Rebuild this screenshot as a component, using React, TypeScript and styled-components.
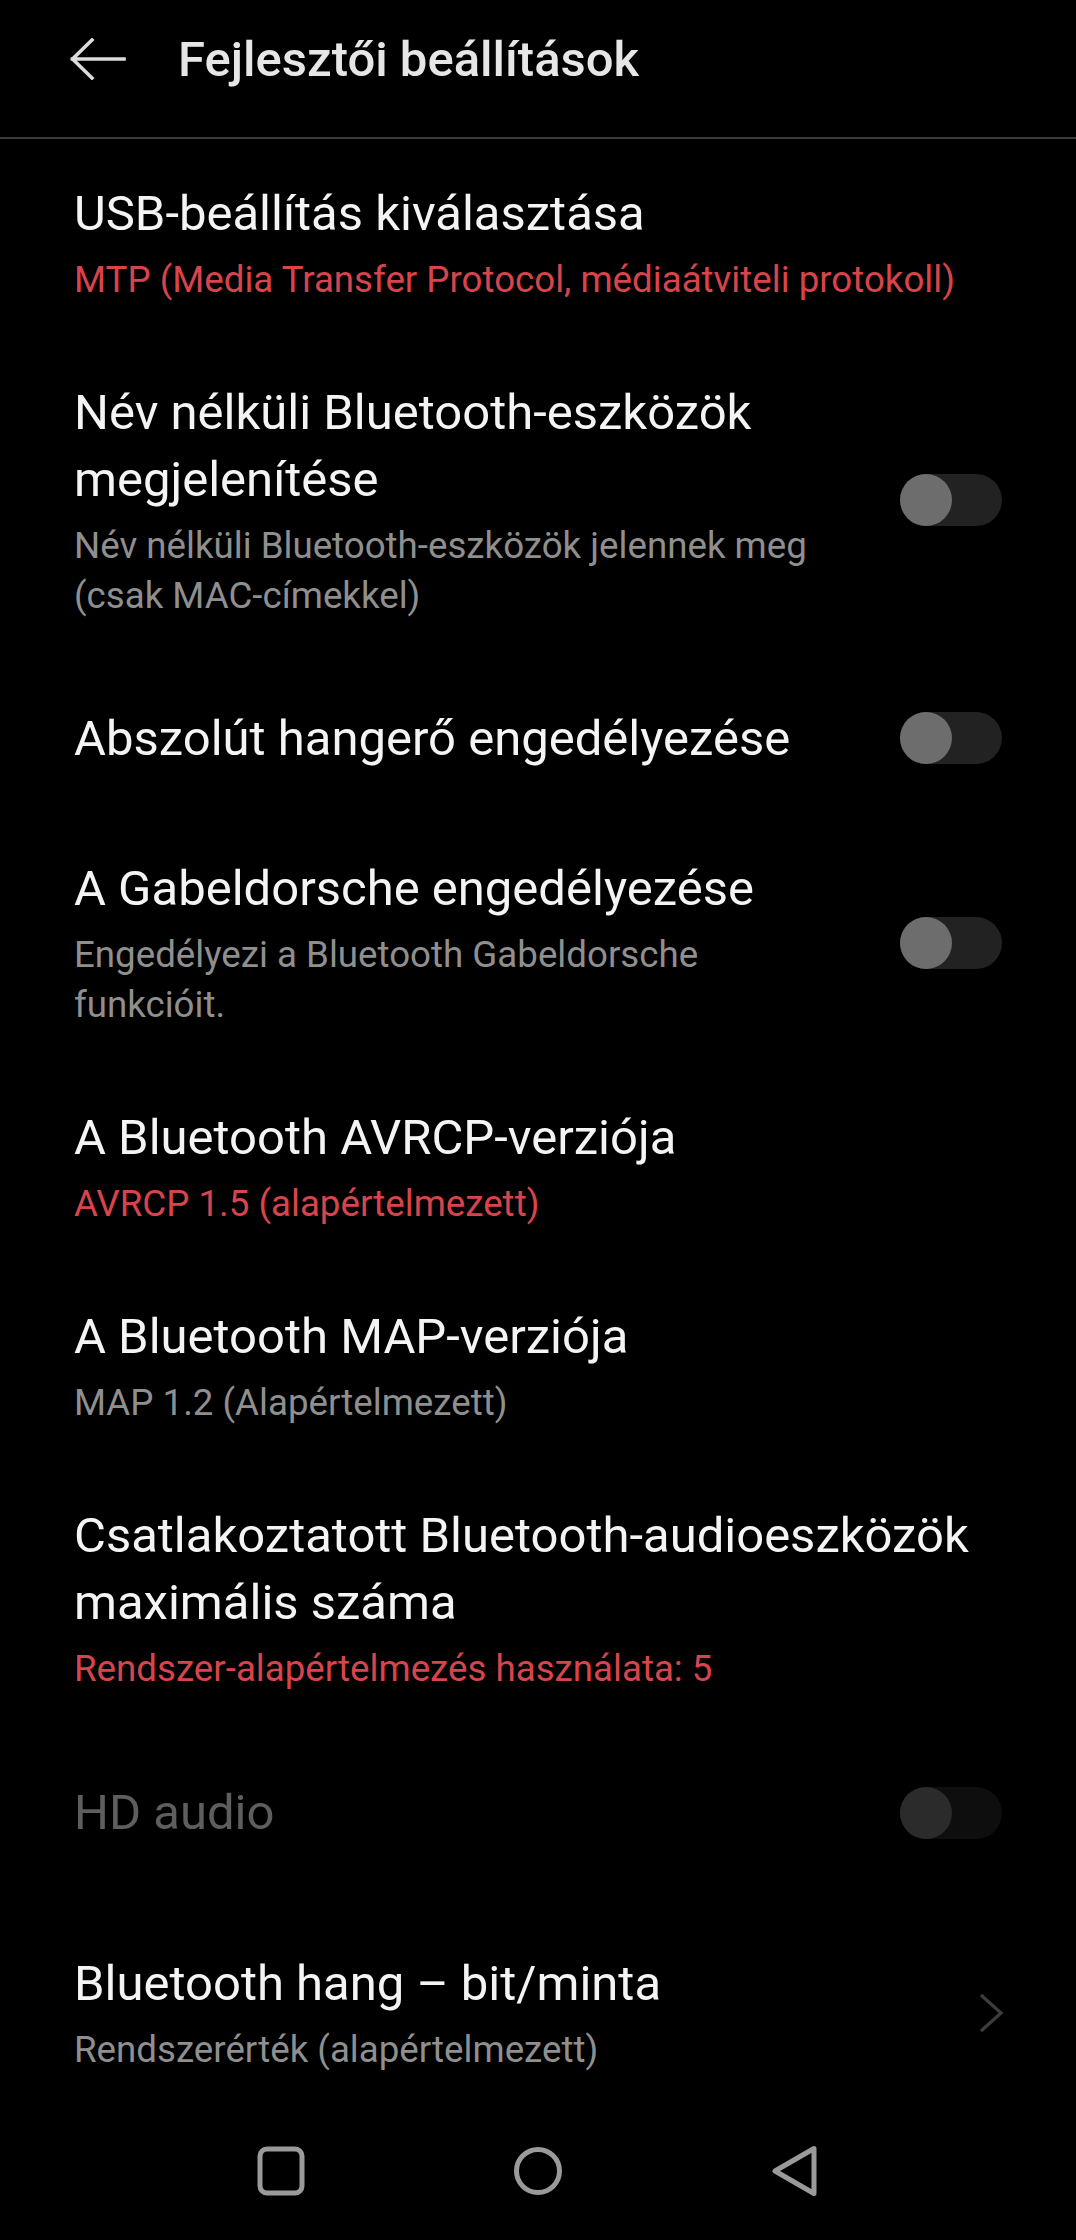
import React from "react";
import styled, { createGlobalStyle } from "styled-components";

const Global = createGlobalStyle`
  html, body { margin: 0; padding: 0; background: #000; }
  body { font-family: Roboto, "Noto Sans", "Liberation Sans", sans-serif; }
  * { box-sizing: border-box; }
`;

const Page = styled.div`
  width: 1076px;
  height: 2240px;
  background: #000;
  display: flex;
  flex-direction: column;
  overflow: hidden;
`;

const Header = styled.header`
  height: 139px;
  padding-bottom: 19px;
  border-bottom: 2px solid #3a3a3a;
  display: flex;
  align-items: center;
  padding-left: 70px;
`;

const BackIcon = styled.svg`
  width: 56px;
  height: 42px;
  flex: none;
`;

const HeaderTitle = styled.h1`
  margin: 0 0 0 52px;
  font-size: 49px;
  font-weight: 500;
  color: #e6e6e6;
  letter-spacing: 0;
`;

const List = styled.div`
  padding-top: 4px;
  display: flex;
  flex-direction: column;
`;

const Item = styled.div<{ $minH?: number; $padTop?: number; $padBottom?: number }>`
  display: flex;
  align-items: center;
  padding: ${(p) => p.$padTop ?? 37}px 74px ${(p) => p.$padBottom ?? 37}px 74px;
  min-height: ${(p) => (p.$minH ? `${p.$minH}px` : "auto")};
`;

const TextCol = styled.div<{ $narrow?: boolean }>`
  flex: 1;
  min-width: 0;
  padding-right: ${(p) => (p.$narrow ? "60px" : "0")};
`;

const Title = styled.div<{ $disabled?: boolean }>`
  font-size: 49px;
  line-height: 67px;
  color: ${(p) => (p.$disabled ? "#5e5e5e" : "#f4f4f4")};
`;

const Summary = styled.div<{ $accent?: boolean }>`
  margin-top: 8px;
  font-size: 36.7px;
  line-height: 50px;
  color: ${(p) => (p.$accent ? "#d8444b" : "#8f8f8f")};
`;

const Track = styled.div<{ $disabled?: boolean }>`
  flex: none;
  width: 102px;
  height: 52px;
  border-radius: 26px;
  background: ${(p) => (p.$disabled ? "#0e0e0e" : "#222222")};
  display: flex;
  align-items: center;
`;

const Thumb = styled.div<{ $disabled?: boolean }>`
  width: 52px;
  height: 52px;
  border-radius: 50%;
  background: ${(p) => (p.$disabled ? "#2b2b2b" : "#6d6d6d")};
`;

const Chevron = styled.svg`
  flex: none;
  width: 26px;
  height: 40px;
  margin-right: -2px;
`;

const NavBar = styled.nav`
  display: flex;
  justify-content: center;
  padding-top: 33px;
`;

const NavCell = styled.div`
  width: 257px;
  display: flex;
  justify-content: center;
`;

const NavIcon = styled.svg`
  width: 52px;
  height: 52px;
`;

type Row = {
  title: string;
  summary?: string;
  accent?: boolean;
  toggle?: boolean;
  disabled?: boolean;
  chevron?: boolean;
  minH?: number;
  padTop?: number;
  padBottom?: number;
};

const rows: Row[] = [
  {
    title: "USB-beállítás kiválasztása",
    summary: "MTP (Media Transfer Protocol, médiaátviteli protokoll)",
    accent: true,
  },
  {
    title: "Név nélküli Bluetooth-eszközök megjelenítése",
    summary: "Név nélküli Bluetooth-eszközök jelennek meg (csak MAC-címekkel)",
    toggle: true,
  },
  { title: "Abszolút hangerő engedélyezése", toggle: true, minH: 160 },
  {
    title: "A Gabeldorsche engedélyezése",
    summary: "Engedélyezi a Bluetooth Gabeldorsche funkcióit.",
    toggle: true,
  },
  {
    title: "A Bluetooth AVRCP-verziója",
    summary: "AVRCP 1.5 (alapértelmezett)",
    accent: true,
  },
  { title: "A Bluetooth MAP-verziója", summary: "MAP 1.2 (Alapértelmezett)" },
  {
    title: "Csatlakoztatott Bluetooth-audioeszközök maximális száma",
    summary: "Rendszer-alapértelmezés használata: 5",
    accent: true,
  },
  { title: "HD audio", toggle: true, disabled: true, padTop: 48, padBottom: 67 },
  {
    title: "Bluetooth hang – bit/minta",
    summary: "Rendszerérték (alapértelmezett)",
    chevron: true,
  },
];

export default function App() {
  return (
    <Page>
      <Global />
      <Header>
        <BackIcon viewBox="0 0 56 42" fill="none">
          <path
            d="M22 2 L2.5 21 L22 40 M2.5 21 L54 21"
            stroke="#dcdcdc"
            strokeWidth="3.6"
            strokeLinecap="square"
            strokeLinejoin="miter"
          />
        </BackIcon>
        <HeaderTitle>Fejlesztői beállítások</HeaderTitle>
      </Header>
      <List>
        {rows.map((r, i) => (
          <Item key={i} $minH={r.minH} $padTop={r.padTop} $padBottom={r.padBottom}>
            <TextCol $narrow={r.toggle}>
              <Title $disabled={r.disabled}>{r.title}</Title>
              {r.summary && <Summary $accent={r.accent}>{r.summary}</Summary>}
            </TextCol>
            {r.toggle && (
              <Track $disabled={r.disabled}>
                <Thumb $disabled={r.disabled} />
              </Track>
            )}
            {r.chevron && (
              <Chevron viewBox="0 0 26 40" fill="none">
                <path d="M3 2 L23 20 L3 38" stroke="#3d3d3d" strokeWidth="3.2" />
              </Chevron>
            )}
          </Item>
        ))}
      </List>
      <NavBar>
        <NavCell>
          <NavIcon viewBox="0 0 52 52" fill="none">
            <rect x="5" y="4" width="42" height="44" rx="7" stroke="#9a9a9a" strokeWidth="5" />
          </NavIcon>
        </NavCell>
        <NavCell>
          <NavIcon viewBox="0 0 52 52" fill="none">
            <circle cx="26" cy="26" r="21.5" stroke="#9a9a9a" strokeWidth="5" />
          </NavIcon>
        </NavCell>
        <NavCell>
          <NavIcon viewBox="0 0 52 52" fill="none">
            <path
              d="M45 3.5 L45 48.5 L6 26 Z"
              stroke="#9a9a9a"
              strokeWidth="5"
              strokeLinejoin="round"
            />
          </NavIcon>
        </NavCell>
      </NavBar>
    </Page>
  );
}
